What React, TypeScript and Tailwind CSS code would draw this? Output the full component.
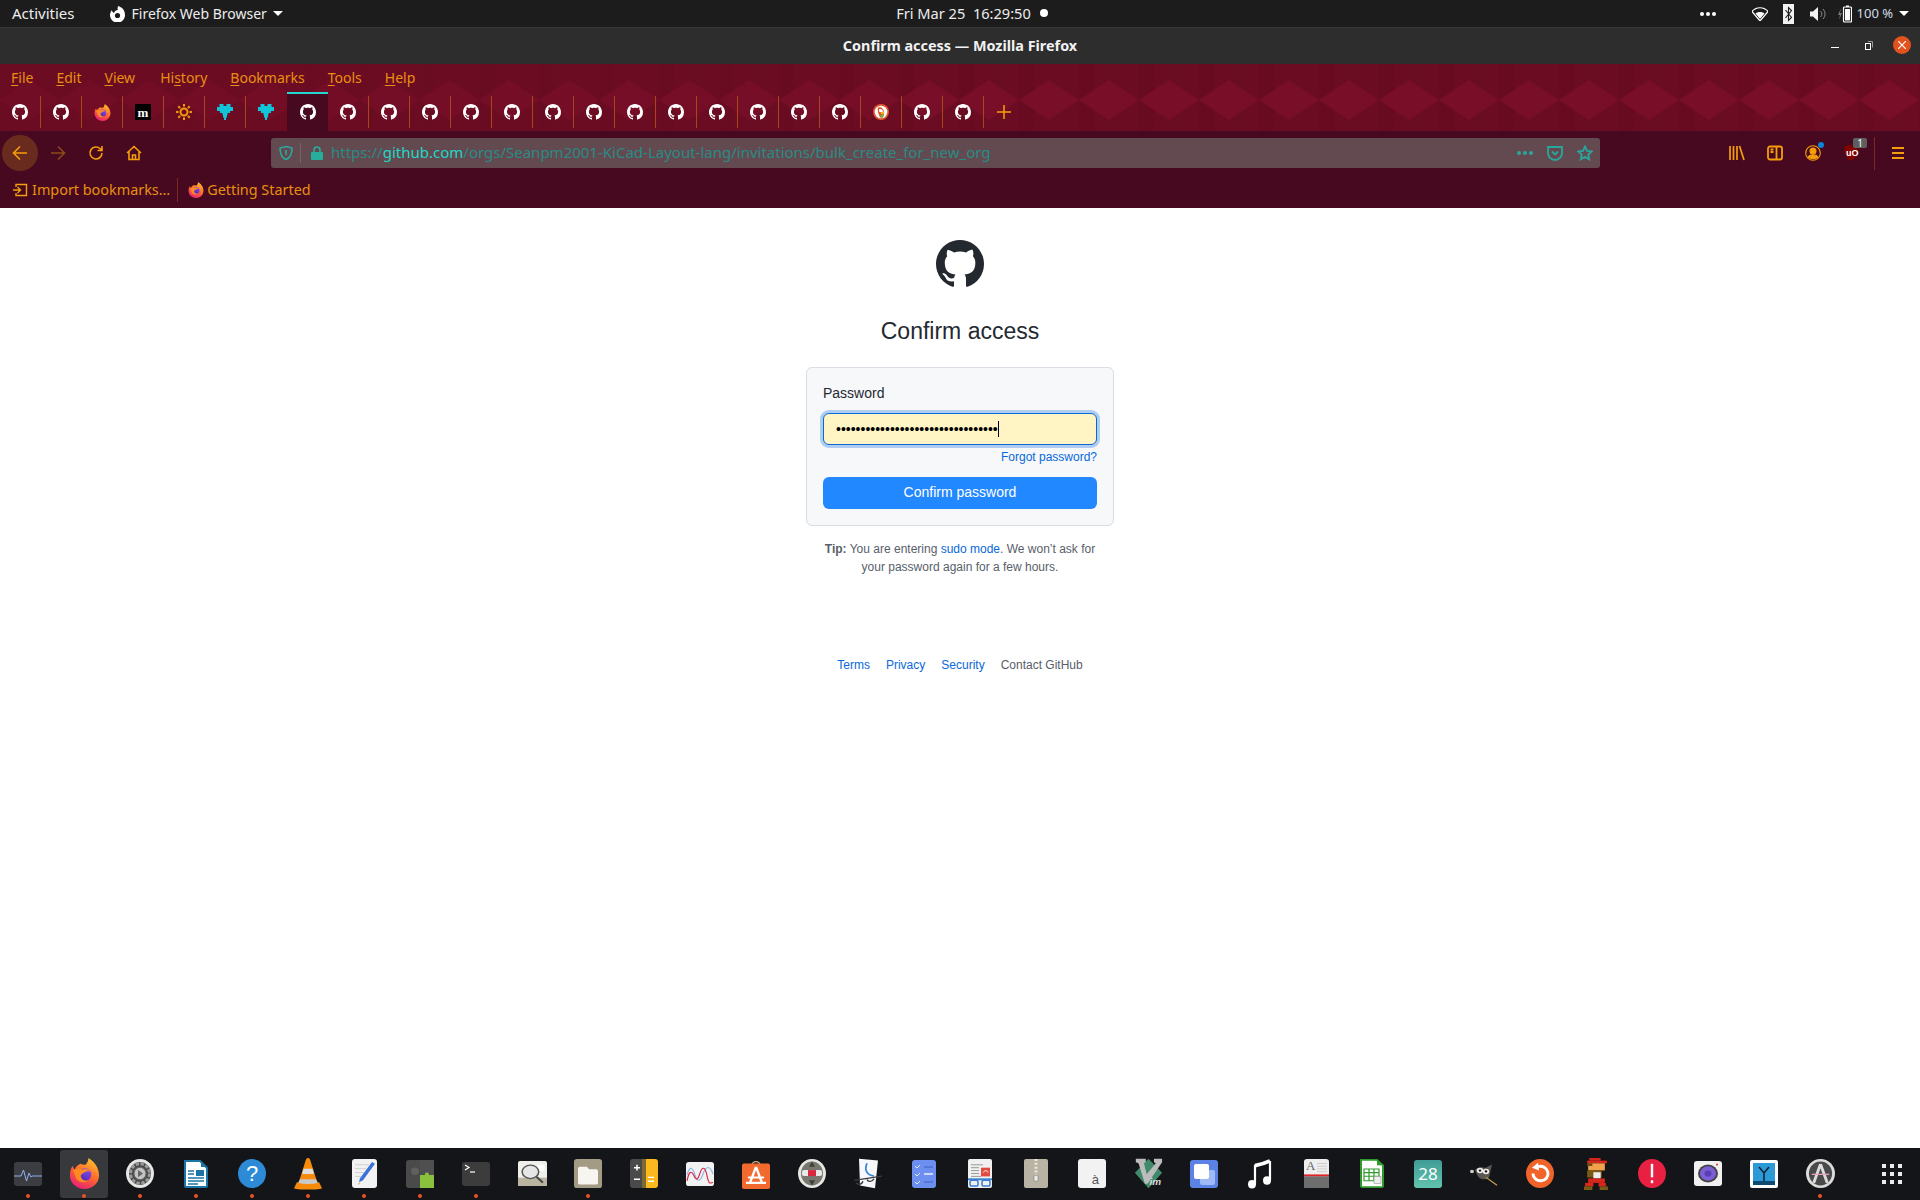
import type { ReactNode } from "react";

const UI_FONT = "font-['Noto_Sans','Open_Sans',sans-serif]";
const WEB_FONT = "font-['Liberation_Sans',Arial,sans-serif]";

const GH_PATH =
  "M8 0C3.58 0 0 3.58 0 8c0 3.54 2.29 6.53 5.47 7.59.4.07.55-.17.55-.38 0-.19-.01-.82-.01-1.49-2.01.37-2.53-.49-2.69-.94-.09-.23-.48-.94-.82-1.13-.28-.15-.68-.52-.01-.53.63-.01 1.08.58 1.23.82.72 1.21 1.87.87 2.33.66.07-.52.28-.87.51-1.07-1.78-.2-3.64-.89-3.64-3.95 0-.87.31-1.59.82-2.15-.08-.2-.36-1.02.08-2.12 0 0 .67-.21 2.2.82.64-.18 1.32-.27 2-.27.68 0 1.36.09 2 .27 1.53-1.04 2.2-.82 2.2-.82.44 1.1.16 1.92.08 2.12.51.56.82 1.27.82 2.15 0 3.07-1.87 3.75-3.65 3.95.29.25.54.73.54 1.48 0 1.07-.01 1.93-.01 2.2 0 .21.15.46.55.38A8.013 8.013 0 0016 8c0-4.42-3.58-8-8-8z";

function GitHubMark({ className }: { className: string }) {
  return (
    <svg viewBox="0 0 16 16" className={className} fill="currentColor">
      <path d={GH_PATH} />
    </svg>
  );
}

function FirefoxLogo({ size }: { size: number }) {
  return (
    <svg viewBox="0 0 32 32" width={size} height={size}>
      <defs>
        <linearGradient id="ffBody" x1="0.8" y1="0" x2="0.3" y2="1">
          <stop offset="0" stopColor="#ffc62e" />
          <stop offset="0.5" stopColor="#ff6b2c" />
          <stop offset="1" stopColor="#e81f76" />
        </linearGradient>
        <linearGradient id="ffGlobe" x1="0.7" y1="0" x2="0.3" y2="1">
          <stop offset="0" stopColor="#8a4df0" />
          <stop offset="1" stopColor="#4f2ab5" />
        </linearGradient>
      </defs>
      <path d="M20 0c5 3 11 9 11 18a15 14 0 01-30 0C1 14 2 10 4 8c0 2 1 3 2 4 1-3 3-5 6-6 1 1 3 1 5 1 2-2 3-4 3-7z" fill="url(#ffBody)" />
      <circle cx="16.500" cy="17" r="6.500" fill="url(#ffGlobe)" />
      <path d="M4 13c3-2 7-3 9-1 3-1 7-1 9 2-3-1-5 0-6 1-3 1-5 3-3 6 1 2 4 3 7 2-3 3-9 3-12-1-2-3-2-6-4-9z" fill="#ff8a1f" />
    </svg>
  );
}

function TabIcon({ kind }: { kind: string }) {
  if (kind === "ff") return <FirefoxLogo size={17} />;
  if (kind === "m")
    return (
      <span className="flex h-4 w-4 items-center justify-center bg-black font-['Liberation_Serif',serif] text-[13px] leading-none font-bold text-white">
        m
      </span>
    );
  if (kind === "sun")
    return (
      <svg viewBox="0 0 16 16" className="h-4 w-4" fill="none" stroke="#f59a0c" strokeWidth="2">
        <circle cx="8" cy="8" r="3.500" />
        <path d="M8 0v2.500M8 13.500V16M0 8h2.500M13.500 8H16M2.300 2.300l1.800 1.800M11.900 11.900l1.800 1.800M13.700 2.300l-1.800 1.800M4.100 11.900l-1.800 1.800" />
      </svg>
    );
  if (kind === "puzzle")
    return (
      <svg viewBox="0 0 16 16" className="h-4 w-4" fill="#11c5d9">
        <path d="M2.500 0h4v2h3V0h4v3H16v4h-3v2h-2.500v2H10v2.500H9V16H7v-2.500H6V11h-.5V9H3V7H0V3h2.500z" />
      </svg>
    );
  if (kind === "ddg")
    return (
      <svg viewBox="0 0 16 16" className="h-4 w-4">
        <circle cx="8" cy="8" r="8" fill="#de5833" />
        <circle cx="8" cy="8" r="6.300" fill="#fff" />
        <path d="M5 3.500c3-1 6 1 6 5 0 2-.5 3.500-1 5H7c-1-3-3-6-2-10z" fill="#de5833" />
        <path d="M6 5.500c2-1 4 0 4 2-1 1-3 1-4 0z" fill="#fff" />
        <path d="M8 8.500l3.500-.5-.5 1.500-3 .5z" fill="#fdd20a" />
        <path d="M8 10.500l3 .5-1 2.500H7.500z" fill="#65bc46" />
      </svg>
    );
  return <GitHubMark className="h-4 w-4 text-white" />;
}

const TABS = [
  "gh", "gh", "ff", "m", "sun", "puzzle", "puzzle", "active",
  "gh", "gh", "gh", "gh", "gh", "gh", "gh", "gh", "gh", "gh", "gh", "gh", "gh",
  "ddg", "gh", "gh",
];

function TabStrip() {
  return (
    <div className="flex h-[39px] items-stretch">
      {TABS.map((tab, i) => {
        const active = tab === "active";
        const nextActive = TABS[i + 1] === "active";
        return (
          <div key={i} className="flex h-full w-[41px] flex-col">
            {active ? (
              <div className="flex h-full flex-col bg-[#47091f]">
                <div className="h-[2px] bg-[#1fd8d0]" />
                <div className="flex flex-1 items-center justify-center pb-[1px]">
                  <TabIcon kind="gh" />
                </div>
              </div>
            ) : (
              <div className="flex h-full items-stretch pt-[4px] pb-[3px]">
                <div className="flex flex-1 items-center justify-center">
                  <TabIcon kind={tab} />
                </div>
                <div className={nextActive ? "w-px" : "w-px bg-[#a8481a]"} />
              </div>
            )}
          </div>
        );
      })}
      <div className="flex w-[39px] items-center justify-center pt-[1px]">
        <svg viewBox="0 0 16 16" className="h-4 w-4" stroke="#f59e0b" strokeWidth="1.500">
          <path d="M8 1v14M1 8h14" />
        </svg>
      </div>
    </div>
  );
}

function DiamondBackground() {
  return (
    <svg className="absolute inset-0 h-full w-full" aria-hidden="true">
      <defs>
        <pattern id="theme" width="60" height="68" patternUnits="userSpaceOnUse" patternTransform="translate(-1 0)">
          <rect width="60" height="68" fill="#6c0c23" />
          <rect x="0" width="15" height="68" fill="#680b21" />
          <rect x="30" width="15" height="68" fill="#6a0c22" />
          <path d="M0 36L30 16L60 36L30 56Z" fill="#780e27" />
        </pattern>
        <linearGradient id="fade" x1="0" x2="1" y1="0" y2="0">
          <stop offset="0" stopColor="#6c0c23" stopOpacity="0.600" />
          <stop offset="0.350" stopColor="#6c0c23" stopOpacity="0.200" />
          <stop offset="0.500" stopColor="#6c0c23" stopOpacity="0" />
        </linearGradient>
      </defs>
      <rect width="100%" height="100%" fill="url(#theme)" />
      <rect width="100%" height="100%" fill="url(#fade)" />
    </svg>
  );
}

function MenuBar() {
  const items: [string, string, string][] = [
    ["", "F", "ile"],
    ["", "E", "dit"],
    ["", "V", "iew"],
    ["Hi", "s", "tory"],
    ["", "B", "ookmarks"],
    ["", "T", "ools"],
    ["", "H", "elp"],
  ];
  return (
    <div className={`flex h-[28px] items-center gap-[23px] pb-[1px] pl-[11px] text-[14px] text-[#e8900f] ${UI_FONT}`}>
      {items.map(([a, b, c]) => (
        <span key={a + b + c} className={a ? "ml-[2px]" : ""}>
          {a}
          <span className="underline underline-offset-2">{b}</span>
          {c}
        </span>
      ))}
    </div>
  );
}

function TopBar() {
  return (
    <div className={`flex h-[28px] items-center border-b border-[#353535] bg-[#1c1c1c] text-[14px] text-[#ececec] ${UI_FONT}`}>
      <div className="flex flex-1 items-center">
        <span className="ml-[12px] text-[15px]">Activities</span>
        <svg viewBox="0 0 16 16" className="ml-[34px] h-4 w-4">
          <path d="M9 0C13 1 16 4 16 9a7.500 7.500 0 11-13-5c0 2 1 2.500 2 3 .5-2 2-3 4-3-1-1 0-3 0-4z" fill="#fff" />
          <circle cx="8.500" cy="9.500" r="2.600" fill="#1c1c1c" />
        </svg>
        <span className="ml-[7px]">Firefox Web Browser</span>
        <span className="ml-[6px] h-0 w-0 border-x-[5px] border-t-[5px] border-x-transparent border-t-white" />
      </div>
      <div className="ml-[24px] flex items-center">
        <span className="text-[14.6px] whitespace-pre">Fri Mar 25  16:29:50</span>
        <span className="ml-[9px] h-[8px] w-[8px] rounded-full bg-white" />
      </div>
      <div className="flex flex-1 items-center justify-end">
        <div className="mr-[36px] flex gap-[2px]">
          <span className="h-[4px] w-[4px] rounded-full bg-white" />
          <span className="h-[4px] w-[4px] rounded-full bg-white" />
          <span className="h-[4px] w-[4px] rounded-full bg-white" />
        </div>
        <svg viewBox="0 0 16 14" className="mr-[15px] h-[14px] w-[16px]">
          <path d="M0 4.500C4-.5 12-.5 16 4.500L8 14z" fill="none" stroke="#fff" strokeWidth="1.200" />
          <path d="M3.500 6.500c2.500-2 6.500-2 9 0L8 12z" fill="#fff" />
        </svg>
        <svg viewBox="0 0 11 20" className="mr-[16px] h-[20px] w-[11px]">
          <rect width="11" height="20" fill="#f2f2f2" />
          <path d="M2.500 6l6 7.500-3 3v-13l3 3-6 7.500" fill="none" stroke="#1c1c1c" strokeWidth="1.100" />
        </svg>
        <svg viewBox="0 0 16 14" className="mr-[12px] h-[14px] w-[16px]">
          <path d="M0 4.500h3L8 0v14L3 9.500H0z" fill="#f2f2f2" />
          <path d="M10.500 4a4 4 0 010 6M13 2a7 7 0 010 10" fill="none" stroke="#8a8a8a" strokeWidth="1" />
        </svg>
        <svg viewBox="0 0 14 18" className="mr-[5px] h-[18px] w-[14px]">
          <path d="M3 3L0 10h2l-1 5 3-7H2z" fill="#777" />
          <rect x="5.500" y="2" width="8" height="15" rx="1" fill="none" stroke="#fff" strokeWidth="1.200" />
          <rect x="7" y="4" width="5" height="11.500" fill="#fff" />
          <rect x="8" y="0.500" width="3" height="1.500" fill="#fff" />
        </svg>
        <span className="text-[13px] text-[#d4dde6]">100 %</span>
        <span className="mr-[11px] ml-[6px] h-0 w-0 border-x-[5px] border-t-[5px] border-x-transparent border-t-white" />
      </div>
    </div>
  );
}

function TitleBar() {
  return (
    <div className={`flex h-[36px] items-center bg-[#2d2d2d] text-[14.4px] font-bold text-[#f2f2f2] ${UI_FONT}`}>
      <div className="flex-1" />
      <span>Confirm access — Mozilla Firefox</span>
      <div className="flex flex-1 items-center justify-end pb-[2px]">
        <span className="mt-[4px] mr-[26px] h-px w-[8px] bg-white" />
        <svg viewBox="0 0 8 9" className="mr-[20px] h-[9px] w-[8px]" fill="none" stroke="#fff">
          <rect x="0.500" y="2.500" width="5" height="6" />
          <path d="M3 .5h4.500v6" stroke="#999" />
        </svg>
        <span className="mr-[9px] flex h-[18px] w-[18px] items-center justify-center rounded-full bg-[#e2521d]">
          <svg viewBox="0 0 8 8" className="h-[8px] w-[8px]" stroke="#fff" strokeWidth="1.200">
            <path d="M0 0l8 8M8 0L0 8" />
          </svg>
        </span>
      </div>
    </div>
  );
}

function Stroke({ children, className, box = "0 0 16 16", color = "#f59e0b", width = 1.6 }: { children: ReactNode; className: string; box?: string; color?: string; width?: number }) {
  return (
    <svg viewBox={box} className={className} fill="none" stroke={color} strokeWidth={width}>
      {children}
    </svg>
  );
}

function Toolbar() {
  return (
    <div className="flex h-[43px] items-center pt-[1px]">
      <div className="ml-[2px] flex h-[36px] w-[36px] items-center justify-center rounded-full bg-[#6a2b1f]">
        <Stroke className="h-4 w-4">
          <path d="M15 8H1.500M8 1.500L1.500 8 8 14.500" />
        </Stroke>
      </div>
      <Stroke className="ml-[12px] h-4 w-4" color="#8f4a18">
        <path d="M1 8h13.500M8 1.500L14.500 8 8 14.500" />
      </Stroke>
      <Stroke className="ml-[22px] h-4 w-4">
        <path d="M14 8a6 6 0 11-1.800-4.300L14 5.500M14 1v4.500H9.500" />
      </Stroke>
      <Stroke className="ml-[22px] h-4 w-4">
        <path d="M1 8l7-6.500L15 8M3 6.500v8h10v-8M6.500 14.500V10h3v4.500" />
      </Stroke>

      <div className="ml-[129px] flex h-[30px] w-[1329px] items-center rounded-[3px] bg-[#634a50]">
        <Stroke className="ml-[7px] h-4 w-4" color="#2aa79b">
          <path d="M8 1.500l6 1.500c0 5-1 9.500-6 11.500C3 12.500 2 8 2 3zM8 5v5" />
        </Stroke>
        <span className="ml-[6px] h-[20px] w-px bg-[#7a6167]" />
        <svg viewBox="0 0 12 14" className="ml-[10px] h-[14px] w-[12px]">
          <path d="M3 6V4a3 3 0 016 0v2" fill="none" stroke="#27ad9c" strokeWidth="1.600" />
          <rect y="6" width="12" height="8" rx="1" fill="#27ad9c" />
        </svg>
        <span className={`ml-[8px] pb-[1px] text-[15px] whitespace-nowrap text-[#2a8a85] ${UI_FONT}`}>
          https://<span className="text-[#1fd8c8]">github.com</span>/orgs/Seanpm2001-KiCad-Layout-lang/invitations/bulk_create_for_new_org
        </span>
        <div className="flex-1" />
        <div className="flex gap-[2px]">
          <span className="h-[4px] w-[4px] rounded-full bg-[#2aa79b]" />
          <span className="h-[4px] w-[4px] rounded-full bg-[#2aa79b]" />
          <span className="h-[4px] w-[4px] rounded-full bg-[#2aa79b]" />
        </div>
        <Stroke className="ml-[14px] h-4 w-4" color="#2aa79b" width={1.8}>
          <path d="M1 2h14v6a7 7 0 01-14 0zM5 6.500l3 3 3-3" />
        </Stroke>
        <Stroke className="mr-[7px] ml-[14px] h-4 w-4" color="#2aa79b" width={1.8}>
          <path d="M8 1.500l2 4.300 4.700.6-3.400 3.200.9 4.700L8 11.900l-4.200 2.400.9-4.700L1.300 6.400 6 5.800z" />
        </Stroke>
      </div>

      <Stroke className="ml-[129px] h-4 w-4" width={1.7}>
        <path d="M1 1v14M4.500 1v14M8 1v14M10.500 1L15 15" />
      </Stroke>
      <Stroke className="ml-[22px] h-4 w-4" width={1.8}>
        <rect x="1" y="1.500" width="14" height="13" rx="2" />
        <path d="M9.500 1.500v13M3.500 4.500h3M3.500 7h3" />
      </Stroke>
      <div className="relative ml-[22px] h-4 w-4">
        <Stroke className="h-4 w-4" width={1.1}>
          <circle cx="8" cy="8" r="7.300" />
          <circle cx="8" cy="6" r="3" fill="#f59e0b" />
          <path d="M3 12c2-3 8-3 10 0-3 2-7 2-10 0z" fill="#f59e0b" />
        </Stroke>
        <span className="absolute -top-[3px] -right-[3px] h-[6px] w-[6px] rounded-full bg-[#0a84d6]" />
      </div>
      <div className="relative ml-[22px] h-4 w-4">
        <svg viewBox="0 0 16 18" className="ml-[1px] h-[16px] w-[14px]" preserveAspectRatio="none">
          <path d="M0 1.500L8 0l8 1.500c0 8-1.500 13-8 16.500C1.500 14.500 0 9.500 0 1.500z" fill="#800000" />
        </svg>
        <span className={`absolute top-[3px] left-[3px] text-[9px] leading-[10px] font-bold text-white ${WEB_FONT}`}>uO</span>
        <span className={`absolute -top-[7px] left-[10px] flex h-[10px] w-[14px] items-center justify-center rounded-[2px] bg-[#5f5f5f] text-[10px] leading-[10px] text-white ${UI_FONT}`}>
          1
        </span>
      </div>
      <span className="ml-[15px] h-[33px] w-px bg-[#7b2a1b]" />
      <Stroke className="ml-[15px] h-4 w-4" width={2}>
        <path d="M2 3h12M2 8h12M2 13h12" />
      </Stroke>
    </div>
  );
}

function BookmarksBar() {
  return (
    <div className={`flex h-[34px] items-center pb-[2px] text-[14.4px] text-[#e8900f] ${UI_FONT}`}>
      <Stroke className="ml-[12px] h-4 w-4" width={1.4}>
        <path d="M4 5V2.500h10.500v11H4V11M1 8h7M5.500 5L8.500 8l-3 3" />
      </Stroke>
      <span className="ml-[4px]">Import bookmarks…</span>
      <span className="ml-[7px] h-[24px] w-px bg-[#7b2a1b]" />
      <span className="ml-[10px]">
        <FirefoxLogo size={16} />
      </span>
      <span className="ml-[3px]">Getting Started</span>
    </div>
  );
}

function LoginPage() {
  return (
    <main className={`flex flex-1 flex-col items-center bg-white pt-[32px] text-[#24292f] ${WEB_FONT}`}>
      <GitHubMark className="h-12 w-12 text-[#24292f]" />
      <h1 className="mt-[25px] text-[23px] leading-[36px] font-normal">Confirm access</h1>
      <div className="mt-[18px] w-[308px] rounded-[6px] border border-[#d8dee4] bg-[#f6f8fa] px-[16px] pt-[15px] pb-[16px]">
        <div className="text-[14px] leading-[21px]">Password</div>
        <div className="mt-[9px] flex h-[32px] items-center rounded-[6px] border border-[#0969da] bg-[#fff5c4] pl-[12px] shadow-[0_0_0_3px_rgba(9,105,218,0.3)]">
          <span className="text-[14px] text-black">{"•".repeat(33)}</span>
          <span className="h-[16px] w-px bg-black" />
        </div>
        <div className="mt-[3px] text-right text-[12px] leading-[18px] text-[#0969da]">Forgot password?</div>
        <div className="mt-[11px] flex h-[32px] items-center justify-center rounded-[6px] bg-[#2188ff] pb-[1px] text-[14px] text-white">
          Confirm password
        </div>
      </div>
      <p className="mt-[14px] text-center text-[12px] leading-[18px] text-[#57606a]">
        <b>Tip:</b> You are entering <span className="text-[#0969da]">sudo mode</span>. We won’t ask for
        <br />
        your password again for a few hours.
      </p>
      <div className="mt-[80px] flex gap-4 text-[12px] leading-[18px] text-[#0969da]">
        <span>Terms</span>
        <span>Privacy</span>
        <span>Security</span>
        <span className="text-[#57606a]">Contact GitHub</span>
      </div>
    </main>
  );
}

// dock icons are drawn on their own grid, then stretched to the measured size
function Ic({ box, w, h, children }: { box: string; w: number; h: number; children: ReactNode }) {
  return (
    <svg viewBox={box} width={w} height={h} preserveAspectRatio="none">
      {children}
    </svg>
  );
}

const DOCK_ICONS: ReactNode[] = [
  <Ic box="0 0 28 24" w={28} h={24}>
    <rect width="28" height="24" rx="3" fill="#3b3d42" />
    <path d="M0 14h7l2.500-6 3 11 2.500-8 2 4 1.500-1h9.500" fill="none" stroke="#8fb3f0" strokeWidth="1" />
  </Ic>,
  <FirefoxLogo size={31} />,
  <Ic box="0 0 28 28" w={28} h={29}>
    <circle cx="14" cy="14" r="14" fill="#e6e6e6" />
    <circle cx="14" cy="14" r="11" fill="#4a4a4a" />
    <circle cx="14" cy="14" r="9.500" fill="none" stroke="#9a9a9a" strokeWidth="3" strokeDasharray="3.500 1.500" />
    <circle cx="14" cy="14" r="6" fill="#c4c4c4" stroke="#666" />
    <path d="M12 10.500l5 3.500-5 3.500z" fill="#666" />
  </Ic>,
  <Ic box="0 0 24 28" w={24} h={28}>
    <path d="M1 1h15l7 7v18a1 1 0 01-1 1H2a1 1 0 01-1-1z" fill="#fff" stroke="#1b75a8" strokeWidth="2" />
    <path d="M17 1l6 6h-6z" fill="#1b75a8" />
    <rect x="12" y="10" width="8" height="6" fill="#1b75a8" />
    <path d="M4 11h6M4 14h6M4 18h16M4 21h16M4 24h10" stroke="#1b75a8" strokeWidth="1.500" />
  </Ic>,
  <Ic box="0 0 28 30" w={28} h={29}>
    <ellipse cx="14" cy="15" rx="14" ry="15" fill="#2c8ad6" />
    <text x="14" y="23" textAnchor="middle" fontSize="22" fill="#fff" fontFamily="Liberation Sans">?</text>
  </Ic>,
  <Ic box="0 0 28 36" w={28} h={32}>
    <path d="M14 0c2 0 2 2 3 5l7 25H4L11 5c1-3 1-5 3-5z" fill="#f58a0b" />
    <path d="M9.500 12h9l1.500 6H8z" fill="#ddd" />
    <path d="M6 24h16l2 4c0 2-4 3-10 3S4 30 4 28z" fill="#c9c9c9" />
    <path d="M3 27l-3 7c0 2 28 2 28 0l-3-7c-2 3-20 3-22 0z" fill="#f58a0b" />
  </Ic>,
  <Ic box="0 0 25 30" w={25} h={29}>
    <rect width="25" height="30" rx="3" fill="#f2f2f2" />
    <path d="M3 6h14M3 10h11M3 14h9M3 18h6" stroke="#cfcfcf" />
    <path d="M20 3l3 2-12 17-4 2 1-4z" fill="#3a72d8" />
    <path d="M7 24l-1.500 3 3-1.500z" fill="#e5b98a" />
  </Ic>,
  <Ic box="0 0 28 30" w={28} h={28}>
    <rect width="28" height="30" rx="3" fill="#4a4a4a" />
    <path d="M14 0h14v30H14z" fill="#4f4f4f" />
    <circle cx="9" cy="12" r="4" fill="#606060" />
    <path d="M14 16h5c-1-3 4-4 4 0h5v14H14z" fill="#8ac23d" />
  </Ic>,
  <Ic box="0 0 28 24" w={28} h={24}>
    <rect width="28" height="24" rx="3" fill="#3c3c3c" />
    <path d="M3 3l4 2.500L3 8" fill="none" stroke="#fff" strokeWidth="1.200" />
    <path d="M8 10h5" stroke="#fff" strokeWidth="1.200" />
  </Ic>,
  <Ic box="0 0 28 30" w={29} h={25}>
    <rect width="28" height="30" rx="2" fill="#f0efe9" />
    <path d="M0 20h28v10H0z" fill="#b9b5a1" />
    <circle cx="22" cy="8" r="4" fill="#fff" />
    <circle cx="12" cy="13" r="8" fill="#e6e6e6" stroke="#555" strokeWidth="1.500" />
    <path d="M18 19l6 7" stroke="#444" strokeWidth="2" />
  </Ic>,
  <Ic box="0 0 28 34" w={28} h={29}>
    <rect width="28" height="34" rx="3" fill="#a49b85" />
    <path d="M4 11a2 2 0 012-2h7l2 3h7a2 2 0 012 2v14a2 2 0 01-2 2H6a2 2 0 01-2-2z" fill="#f7f5f0" />
  </Ic>,
  <Ic box="0 0 28 30" w={28} h={29}>
    <rect width="14" height="30" rx="3" fill="#4a4a4a" />
    <rect x="14" width="14" height="30" rx="3" fill="#fbb81f" />
    <rect x="12" width="4" height="30" fill="#7c6a35" />
    <path d="M4 9h6M7 6v6M4 21h6M18 19h6M18 23h6" stroke="#fff" strokeWidth="1.500" />
  </Ic>,
  <Ic box="0 0 28 28" w={28} h={24}>
    <rect width="28" height="28" rx="3" fill="#f2f2f2" />
    <path d="M1 15c3-12 6-8 8 0s5 9 8-1 7-10 10 0" fill="none" stroke="#8bb9e8" strokeWidth="1.200" />
    <path d="M1 22c2-11 4-13 7-6s4 4 6-3 5-9 7 3 4 8 6 8" fill="none" stroke="#dc2746" strokeWidth="1.200" />
  </Ic>,
  <Ic box="0 0 28 34" w={28} h={30}>
    <path d="M10 7a4 4 0 018 0" fill="none" stroke="#d2b58a" strokeWidth="1.500" />
    <rect y="5" width="28" height="29" rx="2" fill="#f26a2e" />
    <path d="M14 9L8 27M14 9l6 18M6 21h16M4 27h20" stroke="#fff" strokeWidth="2.400" fill="none" />
  </Ic>,
  <Ic box="0 0 28 34" w={28} h={29}>
    <ellipse cx="14" cy="17" rx="14" ry="17" fill="#e6e6e2" />
    <ellipse cx="14" cy="17" rx="11" ry="14" fill="#77776f" />
    <path d="M14 3l3 6h-6zM14 31l-3-6h6z" fill="#3f3f3a" />
    <rect x="4" y="13" width="20" height="7" rx="2" fill="#e8e8e8" />
    <rect x="10" y="13" width="8" height="7" fill="#d9283e" />
  </Ic>,
  <Ic box="0 0 28 36" w={28} h={31}>
    <path d="M5 1l19 2-3 32-15-3z" fill="#f6f8fb" />
    <path d="M13 6c-3 8 0 14 7 15" fill="none" stroke="#3d86d6" strokeWidth="1.800" />
    <path d="M0 26l28-5M2 29c3 3 6 1 7-2M13 25c1 3 5 3 7-1" fill="none" stroke="#3a3a3a" strokeWidth="1.500" />
  </Ic>,
  <Ic box="0 0 24 28" w={24} h={28}>
    <rect width="24" height="28" rx="3" fill="#6c8ff0" />
    <path d="M3 6l2 2 3-3M3 14l2 2 3-3M3 22l2 2 3-3" fill="none" stroke="#fff" strokeOpacity="0.800" />
    <path d="M12 7h9M12 22h9" stroke="#3f5fc0" />
    <path d="M12 14h9" stroke="#fff" strokeWidth="1.300" />
  </Ic>,
  <Ic box="0 0 24 30" w={24} h={29}>
    <rect width="24" height="30" rx="2" fill="#f0f0f0" />
    <path d="M3 6h12M3 9h8M3 12h8M3 15h8M3 18h10" stroke="#999" />
    <rect x="13" y="9" width="9" height="9" fill="#e04a3f" />
    <path d="M15 14c2-3 5-2 5 0" stroke="#fff" fill="none" />
    <path d="M0 21h24" stroke="#3a7ed0" strokeWidth="2" />
    <rect x="2" y="22" width="8" height="6" rx="2" fill="none" stroke="#3a7ed0" strokeWidth="1.500" />
    <rect x="14" y="22" width="8" height="6" rx="2" fill="none" stroke="#3a7ed0" strokeWidth="1.500" />
  </Ic>,
  <Ic box="0 0 24 30" w={24} h={29}>
    <rect width="24" height="30" rx="2" fill="#b8b3a3" />
    <path d="M12 0v18" stroke="#e8e6de" strokeWidth="3" strokeDasharray="2 2" />
    <rect x="10" y="17" width="4" height="6" rx="1" fill="#ececec" stroke="#777" strokeWidth="0.600" />
  </Ic>,
  <div className="relative h-[29px] w-[28px] rounded-[3px] bg-[#f2f2f2]">
    <span className={`absolute right-[7px] bottom-[2px] text-[13px] leading-none text-[#555] ${WEB_FONT}`}>à</span>
  </div>,
  <Ic box="0 0 32 36" w={29} h={31}>
    <path d="M16 1l15 16-15 18L1 17z" fill="#3f8a6b" />
    <path d="M2 1h11v4l-2 1 3 13L24 6l-2-1V1h9v4L15 30h-3L5 6 2 5z" fill="#bcbcbc" />
    <text x="17" y="31" fontSize="11" fontStyle="italic" fontWeight="bold" fill="#ddd" fontFamily="Liberation Sans">im</text>
  </Ic>,
  <Ic box="0 0 28 28" w={28} h={28}>
    <rect width="28" height="28" rx="3" fill="#5b83e6" />
    <rect x="10" y="10" width="15" height="15" rx="2" fill="#a0baf5" />
    <rect x="4" y="4" width="15" height="15" rx="2" fill="#fff" />
  </Ic>,
  <Ic box="0 0 24 32" w={24} h={30}>
    <path d="M7 6v20M22 2v20" stroke="#fff" strokeWidth="2.200" />
    <path d="M7 7c5-1 11-3 15-5" stroke="#fff" strokeWidth="4" fill="none" />
    <ellipse cx="4" cy="27" rx="4" ry="4.500" fill="#fff" />
    <ellipse cx="19" cy="23" rx="4" ry="4.500" fill="#fff" />
  </Ic>,
  <Ic box="0 0 25 32" w={25} h={29}>
    <rect width="25" height="32" rx="3" fill="#eee" />
    <path d="M0 19h25v13H0z" fill="#6e6e6e" />
    <path d="M0 18h25" stroke="#e2222a" strokeWidth="2" />
    <text x="2" y="12" fontSize="13" fill="#666" fontFamily="Liberation Serif">A</text>
    <path d="M13 5h10M13 8h10M13 11h10M13 14h10" stroke="#ccc" />
  </Ic>,
  <Ic box="0 0 24 32" w={24} h={29}>
    <path d="M1 1h16l6 6v23a1 1 0 01-1 1H2a1 1 0 01-1-1z" fill="#fff" stroke="#2f9a2c" strokeWidth="2" />
    <path d="M17 1l6 6h-6z" fill="#2f9a2c" />
    <path d="M4 11h15v13H4zM4 15h15M4 19h15M9 11v13M14 11v13" fill="none" stroke="#2f9a2c" strokeWidth="1.200" />
    <rect x="14" y="19" width="7" height="8" fill="#eee" stroke="#777" strokeWidth="0.500" />
  </Ic>,
  <div className={`flex h-[28px] w-[28px] items-center justify-center rounded-[3px] bg-gradient-to-b from-[#3f9c96] to-[#62c4ad] text-[17px] text-white ${UI_FONT}`}>28</div>,
  <Ic box="0 0 30 30" w={30} h={26}>
    <path d="M6 10c4-4 8-3 10-2l7-4-2 10c0 5-3 8-7 7-4 0-6-5-8-11z" fill="#5b5750" />
    <circle cx="3" cy="12" r="2" fill="#ccc" />
    <circle cx="11" cy="11" r="3.200" fill="#eee" />
    <circle cx="17" cy="12" r="3.200" fill="#eee" />
    <circle cx="11" cy="11" r="1.300" fill="#111" />
    <circle cx="17" cy="12" r="1.300" fill="#111" />
    <path d="M17 19l11 9" stroke="#caa24a" strokeWidth="1.200" />
  </Ic>,
  <Ic box="0 0 28 30" w={28} h={29}>
    <ellipse cx="14" cy="15" rx="14" ry="15" fill="#f0642a" />
    <path d="M12 8a7.500 7.500 0 11-5 7" fill="none" stroke="#fff" strokeWidth="3" />
    <path d="M12 4l-6 5 7 3z" fill="#fff" />
  </Ic>,
  <Ic box="0 0 24 36" w={25} h={32}>
    <rect x="5" y="0" width="11" height="3" fill="#d8261c" />
    <rect x="3" y="3" width="19" height="3" fill="#d8261c" />
    <rect x="4" y="6" width="16" height="8" fill="#f2a24b" />
    <rect x="3" y="6" width="5" height="3" fill="#6b4a10" />
    <rect x="3" y="14" width="14" height="8" fill="#7a5a14" />
    <rect x="9" y="16" width="7" height="7" fill="#eee" />
    <rect x="4" y="23" width="16" height="5" fill="#d8261c" />
    <rect x="1" y="28" width="8" height="4" fill="#d8261c" />
    <rect x="14" y="28" width="7" height="4" fill="#d8261c" />
    <rect x="0" y="32" width="8" height="4" fill="#7a5a14" />
    <rect x="15" y="32" width="8" height="4" fill="#7a5a14" />
  </Ic>,
  <Ic box="0 0 28 30" w={28} h={29}>
    <ellipse cx="14" cy="15" rx="14" ry="15" fill="#e82143" />
    <rect x="12.800" y="5" width="2.400" height="14" fill="#fff" />
    <rect x="12.800" y="22" width="2.400" height="3" fill="#fff" />
  </Ic>,
  <Ic box="0 0 28 28" w={28} h={25}>
    <rect width="28" height="28" rx="3" fill="#f1f1f1" />
    <circle cx="14" cy="14" r="10" fill="#444" />
    <circle cx="14" cy="14" r="8" fill="#7c5fd6" />
    <circle cx="14" cy="14" r="3.500" fill="#5a3fb4" />
    <rect x="22" y="3" width="2" height="2" fill="#e2521d" />
  </Ic>,
  <Ic box="0 0 28 28" w={28} h={28}>
    <rect width="28" height="28" rx="2" fill="#fff" />
    <rect x="3" y="3" width="22" height="22" fill="#2d9ad8" />
    <rect x="3" y="21" width="22" height="4" fill="#0f4a70" />
    <path d="M14 21v-9M14 13l-5-6M14 13l5-6" stroke="#123" strokeWidth="1.500" />
  </Ic>,
  <Ic box="0 0 30 34" w={29} h={29}>
    <ellipse cx="15" cy="17" rx="15" ry="17" fill="#dcdcdc" />
    <ellipse cx="15" cy="17" rx="12" ry="14" fill="#4a4a4a" />
    <path d="M15 6L8 28M15 6l7 22" stroke="#ddd" strokeWidth="3" />
    <path d="M6 18h18" stroke="#e6a0c0" strokeWidth="1.500" />
  </Ic>,
];

const RUNNING = new Set([0, 1, 2, 3, 4, 5, 6, 7, 8, 10, 32]);

function Dock() {
  return (
    <div className="flex h-[52px] items-stretch bg-[#141518]">
      {DOCK_ICONS.map((icon, i) => (
        <div key={i} className="relative flex w-[56px] items-center justify-center pb-[1px]">
          {i === 1 && <div className="absolute top-[2px] left-[4px] h-[48px] w-[48px] rounded-[3px] bg-[#38393c]" />}
          <div className="relative flex items-center justify-center">{icon}</div>
          {RUNNING.has(i) && <span className="absolute bottom-[2px] left-[26px] h-[4px] w-[4px] rounded-full bg-[#e95420]" />}
        </div>
      ))}
      <div className="ml-[16px] flex w-[56px] items-center justify-center pb-[1px]">
        <div className="grid grid-cols-3 gap-[4px]">
          {Array.from({ length: 9 }).map((_, i) => (
            <span key={i} className="h-[4px] w-[4px] bg-[#ececec]" />
          ))}
        </div>
      </div>
    </div>
  );
}

export default function App() {
  return (
    <div className="flex h-[1200px] w-[1920px] flex-col overflow-hidden bg-white">
      <TopBar />
      <TitleBar />
      <div className="relative h-[67px]">
        <DiamondBackground />
        <div className="relative">
          <MenuBar />
          <TabStrip />
        </div>
      </div>
      <div className="bg-[#47091f]">
        <Toolbar />
        <BookmarksBar />
      </div>
      <LoginPage />
      <Dock />
    </div>
  );
}
